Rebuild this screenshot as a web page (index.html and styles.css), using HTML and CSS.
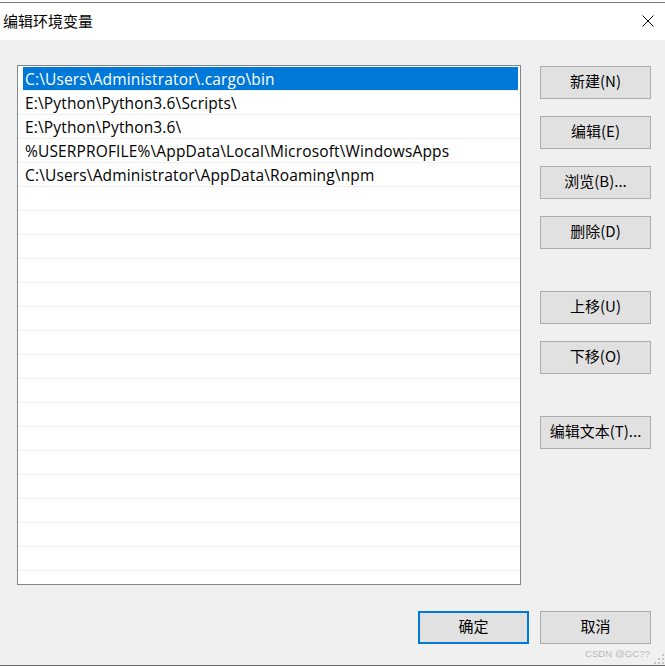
FILE: index.html
```html
<!DOCTYPE html>
<html lang="zh-CN">
<head>
<meta charset="utf-8">
<title>编辑环境变量</title>
<link rel="stylesheet" href="styles.css">
</head>
<body>
<div class="window">
  <div class="topgap"></div>
  <div class="titlebar">
    <span class="title">编辑环境变量</span>
    <svg class="close" width="12" height="12" viewBox="0 0 12 12"><path d="M0.5 0.5 L11.5 11.5 M11.5 0.5 L0.5 11.5" stroke="#000" stroke-width="1" fill="none"/></svg>
  </div>
  <div class="content">
    <div class="main">
      <div class="listbox">
        <div class="row selected"><span class="cell">C:\Users\Administrator\.cargo\bin</span></div>
        <div class="row"><span class="cell">E:\Python\Python3.6\Scripts\</span></div>
        <div class="row"><span class="cell">E:\Python\Python3.6\</span></div>
        <div class="row"><span class="cell">%USERPROFILE%\AppData\Local\Microsoft\WindowsApps</span></div>
        <div class="row"><span class="cell">C:\Users\Administrator\AppData\Roaming\npm</span></div>
        <div class="row"><span class="cell"></span></div>
        <div class="row"><span class="cell"></span></div>
        <div class="row"><span class="cell"></span></div>
        <div class="row"><span class="cell"></span></div>
        <div class="row"><span class="cell"></span></div>
        <div class="row"><span class="cell"></span></div>
        <div class="row"><span class="cell"></span></div>
        <div class="row"><span class="cell"></span></div>
        <div class="row"><span class="cell"></span></div>
        <div class="row"><span class="cell"></span></div>
        <div class="row"><span class="cell"></span></div>
        <div class="row"><span class="cell"></span></div>
        <div class="row"><span class="cell"></span></div>
        <div class="row"><span class="cell"></span></div>
        <div class="row"><span class="cell"></span></div>
        <div class="row"><span class="cell"></span></div>
      </div>
      <div class="side">
        <div class="group">
          <button class="btn">新建(N)</button>
          <button class="btn">编辑(E)</button>
          <button class="btn">浏览(B)...</button>
          <button class="btn">删除(D)</button>
        </div>
        <div class="group">
          <button class="btn">上移(U)</button>
          <button class="btn">下移(O)</button>
        </div>
        <div class="group">
          <button class="btn">编辑文本(T)...</button>
        </div>
      </div>
    </div>
    <div class="footer">
      <button class="btn default">确定</button>
      <button class="btn">取消</button>
    </div>
    <div class="watermark">CSDN @GC??</div>
    <svg class="grip" width="10" height="10" viewBox="0 0 10 10">
      <g fill="#c4c4c4">
        <rect x="8" y="0" width="2" height="2"/>
        <rect x="4" y="4" width="2" height="2"/><rect x="8" y="4" width="2" height="2"/>
        <rect x="0" y="8" width="2" height="2"/><rect x="4" y="8" width="2" height="2"/><rect x="8" y="8" width="2" height="2"/>
      </g>
    </svg>
  </div>
</div>
</body>
</html>
```
FILE: styles.css
```css
* { box-sizing: border-box; }
html, body { margin: 0; padding: 0; }
body {
  width: 665px;
  height: 667px;
  background: #ffffff;
  font-family: "Open Sans", "Noto Sans CJK SC", sans-serif;
  overflow: hidden;
}
.window {
  display: flex;
  flex-direction: column;
  height: 667px;
}
.topgap { height: 2px; background: #ffffff; }
.titlebar {
  height: 38px;
  border-top: 1px solid #7a7a7a;
  background: #ffffff;
  display: flex;
  align-items: center;
  justify-content: space-between;
  padding: 0 11px 2px 3px;
}
.title {
  font-family: "Noto Sans CJK SC", sans-serif;
  font-size: 15px;
  color: #000;
  line-height: 20px;
}
.close { display: block; }
.content {
  position: relative;
  height: 626px;
  background: #f0f0f0;
  border-bottom: 1px solid #6d6d6d;
  padding: 25px 14px 0 17px;
  display: flex;
  flex-direction: column;
}
.main {
  display: flex;
  gap: 19px;
}
.listbox {
  width: 504px;
  height: 520px;
  border: 1px solid #828790;
  background: #ffffff;
  padding-top: 1px;
  overflow: hidden;
}
.row {
  height: 24px;
  margin: 0 1px 0 1px;
  border-bottom: 1px solid #f0f0f0;
  display: flex;
}
.cell {
  flex: 1;
  margin: 0 1px 0 4px;
  height: 23px;
  line-height: 24px;
  padding-left: 2px;
  font-size: 15.5px;
  letter-spacing: 0.15px;
  color: #000;
  white-space: nowrap;
}
.row.selected .cell {
  background: #0078d7;
  color: #ffffff;
}
.side {
  display: flex;
  flex-direction: column;
  gap: 42px;
  padding-top: 1px;
}
.group {
  display: flex;
  flex-direction: column;
  gap: 17px;
}
.btn {
  width: 111px;
  height: 33px;
  margin: 0;
  padding: 0 0 3px 0;
  background: #e1e1e1;
  border: 1px solid #adadad;
  font-family: "Noto Sans CJK SC", sans-serif;
  font-size: 15px;
  color: #000;
  line-height: 20px;
}
.btn.default {
  border: 2px solid #0078d7;
}
.footer {
  display: flex;
  justify-content: flex-end;
  gap: 11px;
  margin-top: 26px;
}
.watermark {
  position: absolute;
  right: 15px;
  bottom: 6px;
  font-family: "Liberation Sans", sans-serif;
  font-size: 9.5px;
  color: #b8b8b8;
  letter-spacing: 0.1px;
}
.grip {
  position: absolute;
  right: 1px;
  bottom: 1px;
}
```
